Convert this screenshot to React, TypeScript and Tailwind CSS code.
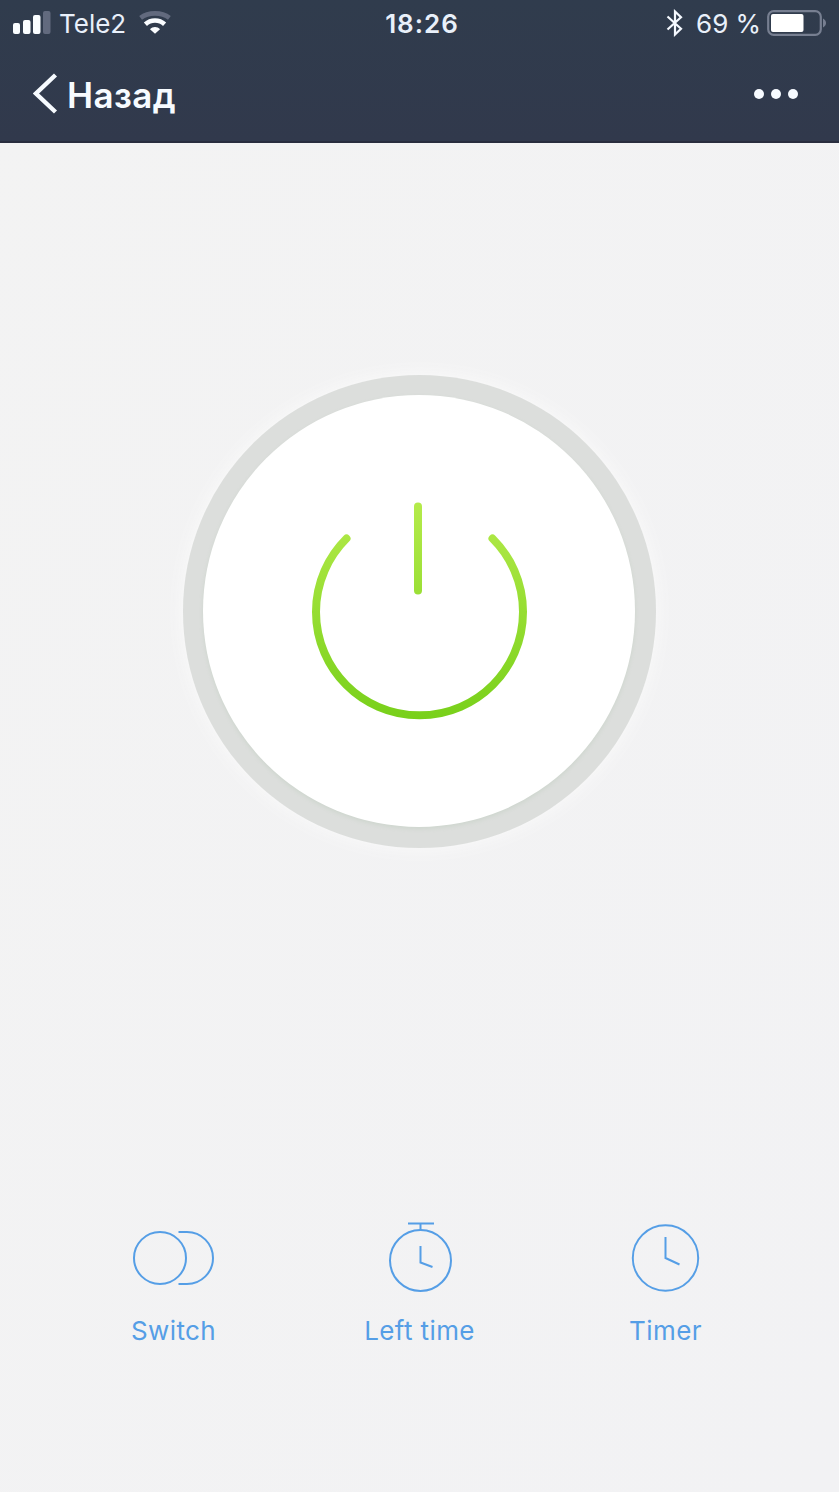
import type { ReactNode } from 'react';

function StatusBar() {
  return (
    <div className="flex h-[46px] items-center pl-[13px] pr-3 text-[#e9f0fa]">
      {/* Carrier */}
      <div className="flex flex-1 items-center">
        <svg width="38" height="24" viewBox="0 0 38 24" fill="#fafdff">
          <rect x="0" y="12" width="7" height="11" rx="2" />
          <rect x="10" y="9" width="7.5" height="14" rx="2" />
          <rect x="20" y="4" width="7.5" height="19" rx="2" />
          <rect x="30" y="0" width="7.5" height="23" rx="2" fill="#626a7e" />
        </svg>
        <span className="ml-2 w-[66px] whitespace-nowrap pt-px text-[26px] leading-none">Tele2</span>
        <svg className="ml-[14px]" width="32" height="24" viewBox="0 0 32 24" fill="none">
          <path d="M1.6 6.8C9.3 0.9 22.7 0.9 30.4 6.8" stroke="#626a7e" strokeWidth="4.6" />
          <path d="M6.4 13.2C11.8 8.2 20.2 8.2 25.6 13.2" stroke="#fafdff" strokeWidth="4.6" />
          <path d="M11 18.2C13.6 15.4 18.4 15.4 21 18.2L16 22.8Z" fill="#fafdff" />
        </svg>
      </div>

      <span className="whitespace-nowrap pl-1 pt-px text-[26px] font-semibold leading-none tracking-[1px]">18:26</span>

      {/* Battery */}
      <div className="flex flex-1 items-center justify-end">
        <svg width="18" height="28" viewBox="0 0 18 28" fill="none" stroke="#f5f9ff" strokeWidth="2.2">
          <path d="M1.5 7.5L15 19.8L9 25.5V2.5L15 8.2L1.5 20.5" />
        </svg>
        <span className="ml-3 w-[65px] whitespace-nowrap pt-px text-[26px] leading-none">69 %</span>
        <svg className="ml-[6px]" width="60" height="26" viewBox="0 0 60 26" fill="none">
          <rect x="1.2" y="1.2" width="52.6" height="23.6" rx="5.5" stroke="#777f91" strokeWidth="2.2" />
          <rect x="4" y="4" width="32.5" height="18" rx="2" fill="#fff" />
          <path d="M56 8.5C60 10.5 60 15.5 56 17.5Z" fill="#777f91" />
        </svg>
      </div>
    </div>
  );
}

function NavBar() {
  return (
    <div className="flex h-[96px] items-center justify-between pl-[33px] pr-[41px] text-[#f7fbff]">
      <button className="flex items-center">
        <svg width="25" height="42" viewBox="0 0 25 42" fill="none" stroke="currentColor" strokeWidth="4.4">
          <path d="M22.5 2L3 20.5L22.5 39" />
        </svg>
        <span className="ml-[9px] whitespace-nowrap pt-0.5 text-[35px] font-semibold leading-none tracking-[0.4px]">Назад</span>
      </button>
      <button className="flex gap-[7px]">
        <span className="size-[10px] rounded-full bg-current" />
        <span className="size-[10px] rounded-full bg-current" />
        <span className="size-[10px] rounded-full bg-current" />
      </button>
    </div>
  );
}

function PowerButton() {
  return (
    <button className="flex size-[473px] items-center justify-center rounded-full bg-[#dcdedc] pb-px pr-px shadow-[0_0_16px_2px_#f9f9f9]">
      <span className="flex size-[432px] items-center justify-center rounded-full bg-white shadow-[0_2px_4px_#ced6ce]">
        <svg width="218" height="220" viewBox="0 0 218 220" fill="none" stroke="url(#power)" strokeWidth="8" strokeLinecap="round">
          <defs>
            <linearGradient id="power" gradientUnits="userSpaceOnUse" x1="0" y1="0" x2="0" y2="218">
              <stop offset="0" stopColor="#b5eb4b" />
              <stop offset="1" stopColor="#78d01a" />
            </linearGradient>
          </defs>
          <path d="M108 5.5V89.5" />
          <path d="M36.5 37.5A103.5 103.5 0 1 0 182.5 37.5" />
        </svg>
      </span>
    </button>
  );
}

function Action({ label, children }: { label: string; children: ReactNode }) {
  return (
    <button className="flex w-[246px] flex-col items-center text-[#559ee6]">
      <svg width="84" height="76" viewBox="0 0 84 76" fill="none" stroke="currentColor" strokeWidth="2">
        {children}
      </svg>
      <span className="mt-[19px] whitespace-nowrap text-[26px] leading-8 tracking-[0.4px]">{label}</span>
    </button>
  );
}

export default function App() {
  return (
    <div className="h-[1492px] w-[839px] overflow-hidden bg-linear-to-br from-[#f3f3f3] to-[#f2f2f4] font-['Inter',sans-serif]">
      <header className="h-[143px] border-b-2 border-[#292d3e] bg-linear-to-b from-[#303c4d] to-[#31394c]">
        <StatusBar />
        <NavBar />
      </header>

      <main className="flex flex-col items-center pt-[232px]">
        <PowerButton />

        <div className="mt-[372px] flex w-[738px]">
          <Action label="Switch">
            <circle cx="28" cy="38" r="26" />
            <path d="M46.5 12H55A26 26 0 0 1 55 64H46.5" />
          </Action>
          <Action label="Left time">
            <circle cx="42.5" cy="40.5" r="30.5" />
            <path d="M30 3.5H56M42.5 3.5V10M42.5 26V42.5L54.5 47" />
          </Action>
          <Action label="Timer">
            <circle cx="41.5" cy="38" r="32.7" />
            <path d="M41.5 17V38L55.5 44.5" />
          </Action>
        </div>
      </main>
    </div>
  );
}
